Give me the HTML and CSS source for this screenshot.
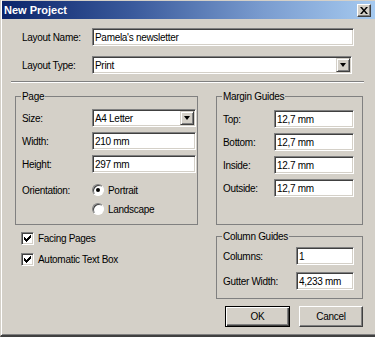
FILE: index.html
```html
<!DOCTYPE html>
<html>
<head>
<meta charset="utf-8">
<link rel="stylesheet" href="styles.css">
</head>
<body>
<div class="window">
  <div class="titlebar">
    <span class="title">New Project</span>
    <span class="close"><svg width="8" height="7" viewBox="0 0 8 7"><path d="M0 0h2l2 2.5L6 0h2L5 3.5 8 7H6L4 4.5 2 7H0l3-3.5z" fill="#000"/></svg></span>
  </div>
  <div class="top">
    <div class="row">
      <span class="lbl">Layout Name:</span>
      <div class="field name">Pamela's newsletter</div>
    </div>
    <div class="row row2">
      <span class="lbl">Layout Type:</span>
      <div class="field select type"><span class="val">Print</span><span class="dd"><i class="tri"></i></span></div>
    </div>
  </div>
  <div class="sep"></div>
  <div class="grid">
    <fieldset class="group page">
      <legend>Page</legend>
      <div class="rows">
        <div class="row"><span class="lbl">Size:</span><div class="field select pf"><span class="val">A4 Letter</span><span class="dd"><i class="tri"></i></span></div></div>
        <div class="row"><span class="lbl">Width:</span><div class="field pf">210 mm</div></div>
        <div class="row"><span class="lbl">Height:</span><div class="field pf">297 mm</div></div>
      </div>
      <div class="orient">
        <div class="orow"><span class="lbl">Orientation:</span><span class="radio on"></span><span>Portrait</span></div>
        <div class="orow"><span class="lbl"></span><span class="radio"></span><span>Landscape</span></div>
      </div>
    </fieldset>
    <fieldset class="group margin">
      <legend>Margin Guides</legend>
      <div class="rows">
        <div class="row"><span class="lbl ml">Top:</span><div class="field mf">12,7 mm</div></div>
        <div class="row"><span class="lbl ml">Bottom:</span><div class="field mf">12,7 mm</div></div>
        <div class="row"><span class="lbl ml">Inside:</span><div class="field mf">12.7 mm</div></div>
        <div class="row"><span class="lbl ml">Outside:</span><div class="field mf">12,7 mm</div></div>
      </div>
    </fieldset>
    <div class="checks">
      <div class="crow"><span class="cb"><svg width="7" height="7" viewBox="0 0 7 7"><path d="M0 2h1v1h1v1h1V3h1V2h1V1h1V0h1v3H6v1H5v1H4v1H3v1H2V6H1V5H0z" fill="#000"/></svg></span><span>Facing Pages</span></div>
      <div class="crow"><span class="cb"><svg width="7" height="7" viewBox="0 0 7 7"><path d="M0 2h1v1h1v1h1V3h1V2h1V1h1V0h1v3H6v1H5v1H4v1H3v1H2V6H1V5H0z" fill="#000"/></svg></span><span>Automatic Text Box</span></div>
    </div>
    <div class="rightbottom">
      <fieldset class="group column">
        <legend>Column Guides</legend>
        <div class="rows crows">
          <div class="row"><span class="lbl cl">Columns:</span><div class="field cf">1</div></div>
          <div class="row"><span class="lbl cl">Gutter Width:</span><div class="field cf">4,233 mm</div></div>
        </div>
      </fieldset>
      <div class="buttons">
        <div class="btn ok">OK</div>
        <div class="btn cancel">Cancel</div>
      </div>
    </div>
  </div>
</div>
</body>
</html>
```
FILE: styles.css
```css
html, body {
  margin: 0;
  padding: 0;
  background: #d4d0c8;
}
.window {
  width: 375px;
  height: 337px;
  box-sizing: border-box;
  background: #d4d0c8;
  border-left: 1px solid #d4d0c8;
  border-bottom: 2px solid #404040;
  padding: 1px 0 0 1px;
  box-shadow: inset 1px 0 0 #fff, inset 0 -1px 0 #808080;
  font-family: "Liberation Sans", Arial, sans-serif;
  font-size: 10px;
  letter-spacing: -0.3px;
  color: #000;
  overflow: hidden;
}
.titlebar {
  height: 18px;
  display: flex;
  align-items: center;
  justify-content: space-between;
  padding: 0 4px 0 2px;
  background: linear-gradient(to right, #0a246a 0%, #3a5a9c 35%, #7a9ccf 70%, #a6caf0 100%);
}
.title {
  color: #fff;
  font-weight: bold;
  font-size: 11px;
  letter-spacing: 0;
}
.close {
  width: 14px;
  height: 13px;
  box-sizing: border-box;
  background: #d4d0c8;
  border: 1px solid;
  border-color: #fff #404040 #404040 #fff;
  box-shadow: inset -1px -1px 0 #808080;
  display: flex;
  align-items: center;
  justify-content: center;
}
.top {
  padding: 9px 0 0 20px;
}
.row {
  display: flex;
  align-items: center;
  height: 18px;
}
.row2 {
  margin-top: 10px;
}
.lbl {
  width: 70px;
  flex: none;
}
.field {
  height: 18px;
  box-sizing: border-box;
  background: #fff;
  border: 1px solid;
  border-color: #808080 #fff #fff #808080;
  box-shadow: inset 1px 1px 0 #404040, inset -1px -1px 0 #d4d0c8;
  padding: 0 0 0 2px;
  display: flex;
  align-items: center;
  white-space: nowrap;
  overflow: hidden;
}
.name { width: 262px; }
.type { width: 260px; }
.select {
  justify-content: space-between;
  padding-right: 1px;
}
.dd {
  width: 14px;
  height: 14px;
  box-sizing: border-box;
  background: #d4d0c8;
  border: 1px solid;
  border-color: #d4d0c8 #404040 #404040 #d4d0c8;
  box-shadow: inset 1px 1px 0 #fff, inset -1px -1px 0 #808080;
  display: flex;
  align-items: center;
  justify-content: center;
  flex: none;
}
.tri {
  width: 0;
  height: 0;
  border-left: 3.5px solid transparent;
  border-right: 3.5px solid transparent;
  border-top: 4px solid #000;
}
.sep {
  margin: 7px 0 0 9px;
  width: 353px;
  height: 1px;
  background: #808080;
  border-bottom: 1px solid #fff;
}
.grid {
  display: grid;
  grid-template-columns: 183px 147px;
  column-gap: 18px;
  row-gap: 5px;
  margin: 7px 0 0 13px;
}
.group {
  margin: 0;
  border: 1px solid #808080;
  padding: 6px 0 7px 6px;
  min-width: 0;
}
.group legend {
  padding: 0 1px;
  margin-left: -1px;
  line-height: 13px;
}
.rows {
  display: flex;
  flex-direction: column;
  gap: 5px;
}
.pf { width: 104px; }
.page { padding-right: 1px; }
.margin { padding-right: 8px; padding-top: 7px; }
.ml { width: 51px; }
.mf { width: 80px; }
.orient {
  margin-top: 9px;
  display: flex;
  flex-direction: column;
  gap: 3px;
}
.orow {
  display: flex;
  align-items: center;
  height: 16px;
}
.radio {
  width: 12px;
  height: 12px;
  box-sizing: border-box;
  border-radius: 50%;
  background: #fff;
  border: 1px solid;
  border-color: #808080 #fff #fff #808080;
  box-shadow: inset 1px 1px 0 #404040;
  margin-right: 4px;
  display: flex;
  align-items: center;
  justify-content: center;
}
.radio.on::after {
  content: "";
  width: 4px;
  height: 4px;
  border-radius: 50%;
  background: #000;
}
.checks {
  display: flex;
  flex-direction: column;
  gap: 8px;
  padding: 2px 0 0 6px;
}
.crow {
  display: flex;
  align-items: center;
  height: 13px;
}
.cb {
  width: 13px;
  height: 13px;
  box-sizing: border-box;
  background: #fff;
  border: 1px solid;
  border-color: #808080 #fff #fff #808080;
  box-shadow: inset 1px 1px 0 #404040, inset -1px -1px 0 #d4d0c8;
  display: flex;
  align-items: center;
  justify-content: center;
  margin-right: 4px;
}
.column {
  padding-top: 4px;
  padding-bottom: 8px;
  padding-right: 8px;
}
.crows { gap: 7px; }
.cl { width: 73px; }
.cf { width: 58px; }
.buttons {
  display: flex;
  gap: 9px;
  margin: 7px 0 0 9px;
}
.btn {
  width: 65px;
  height: 21px;
  box-sizing: border-box;
  display: flex;
  align-items: center;
  justify-content: center;
  border: 1px solid;
}
.ok {
  border-color: #000;
  box-shadow: inset 1px 1px 0 #fff, inset -1px -1px 0 #404040, inset -2px -2px 0 #808080;
}
.cancel {
  width: 64px;
  border-color: #fff #404040 #404040 #fff;
  box-shadow: inset -1px -1px 0 #808080;
}
```
